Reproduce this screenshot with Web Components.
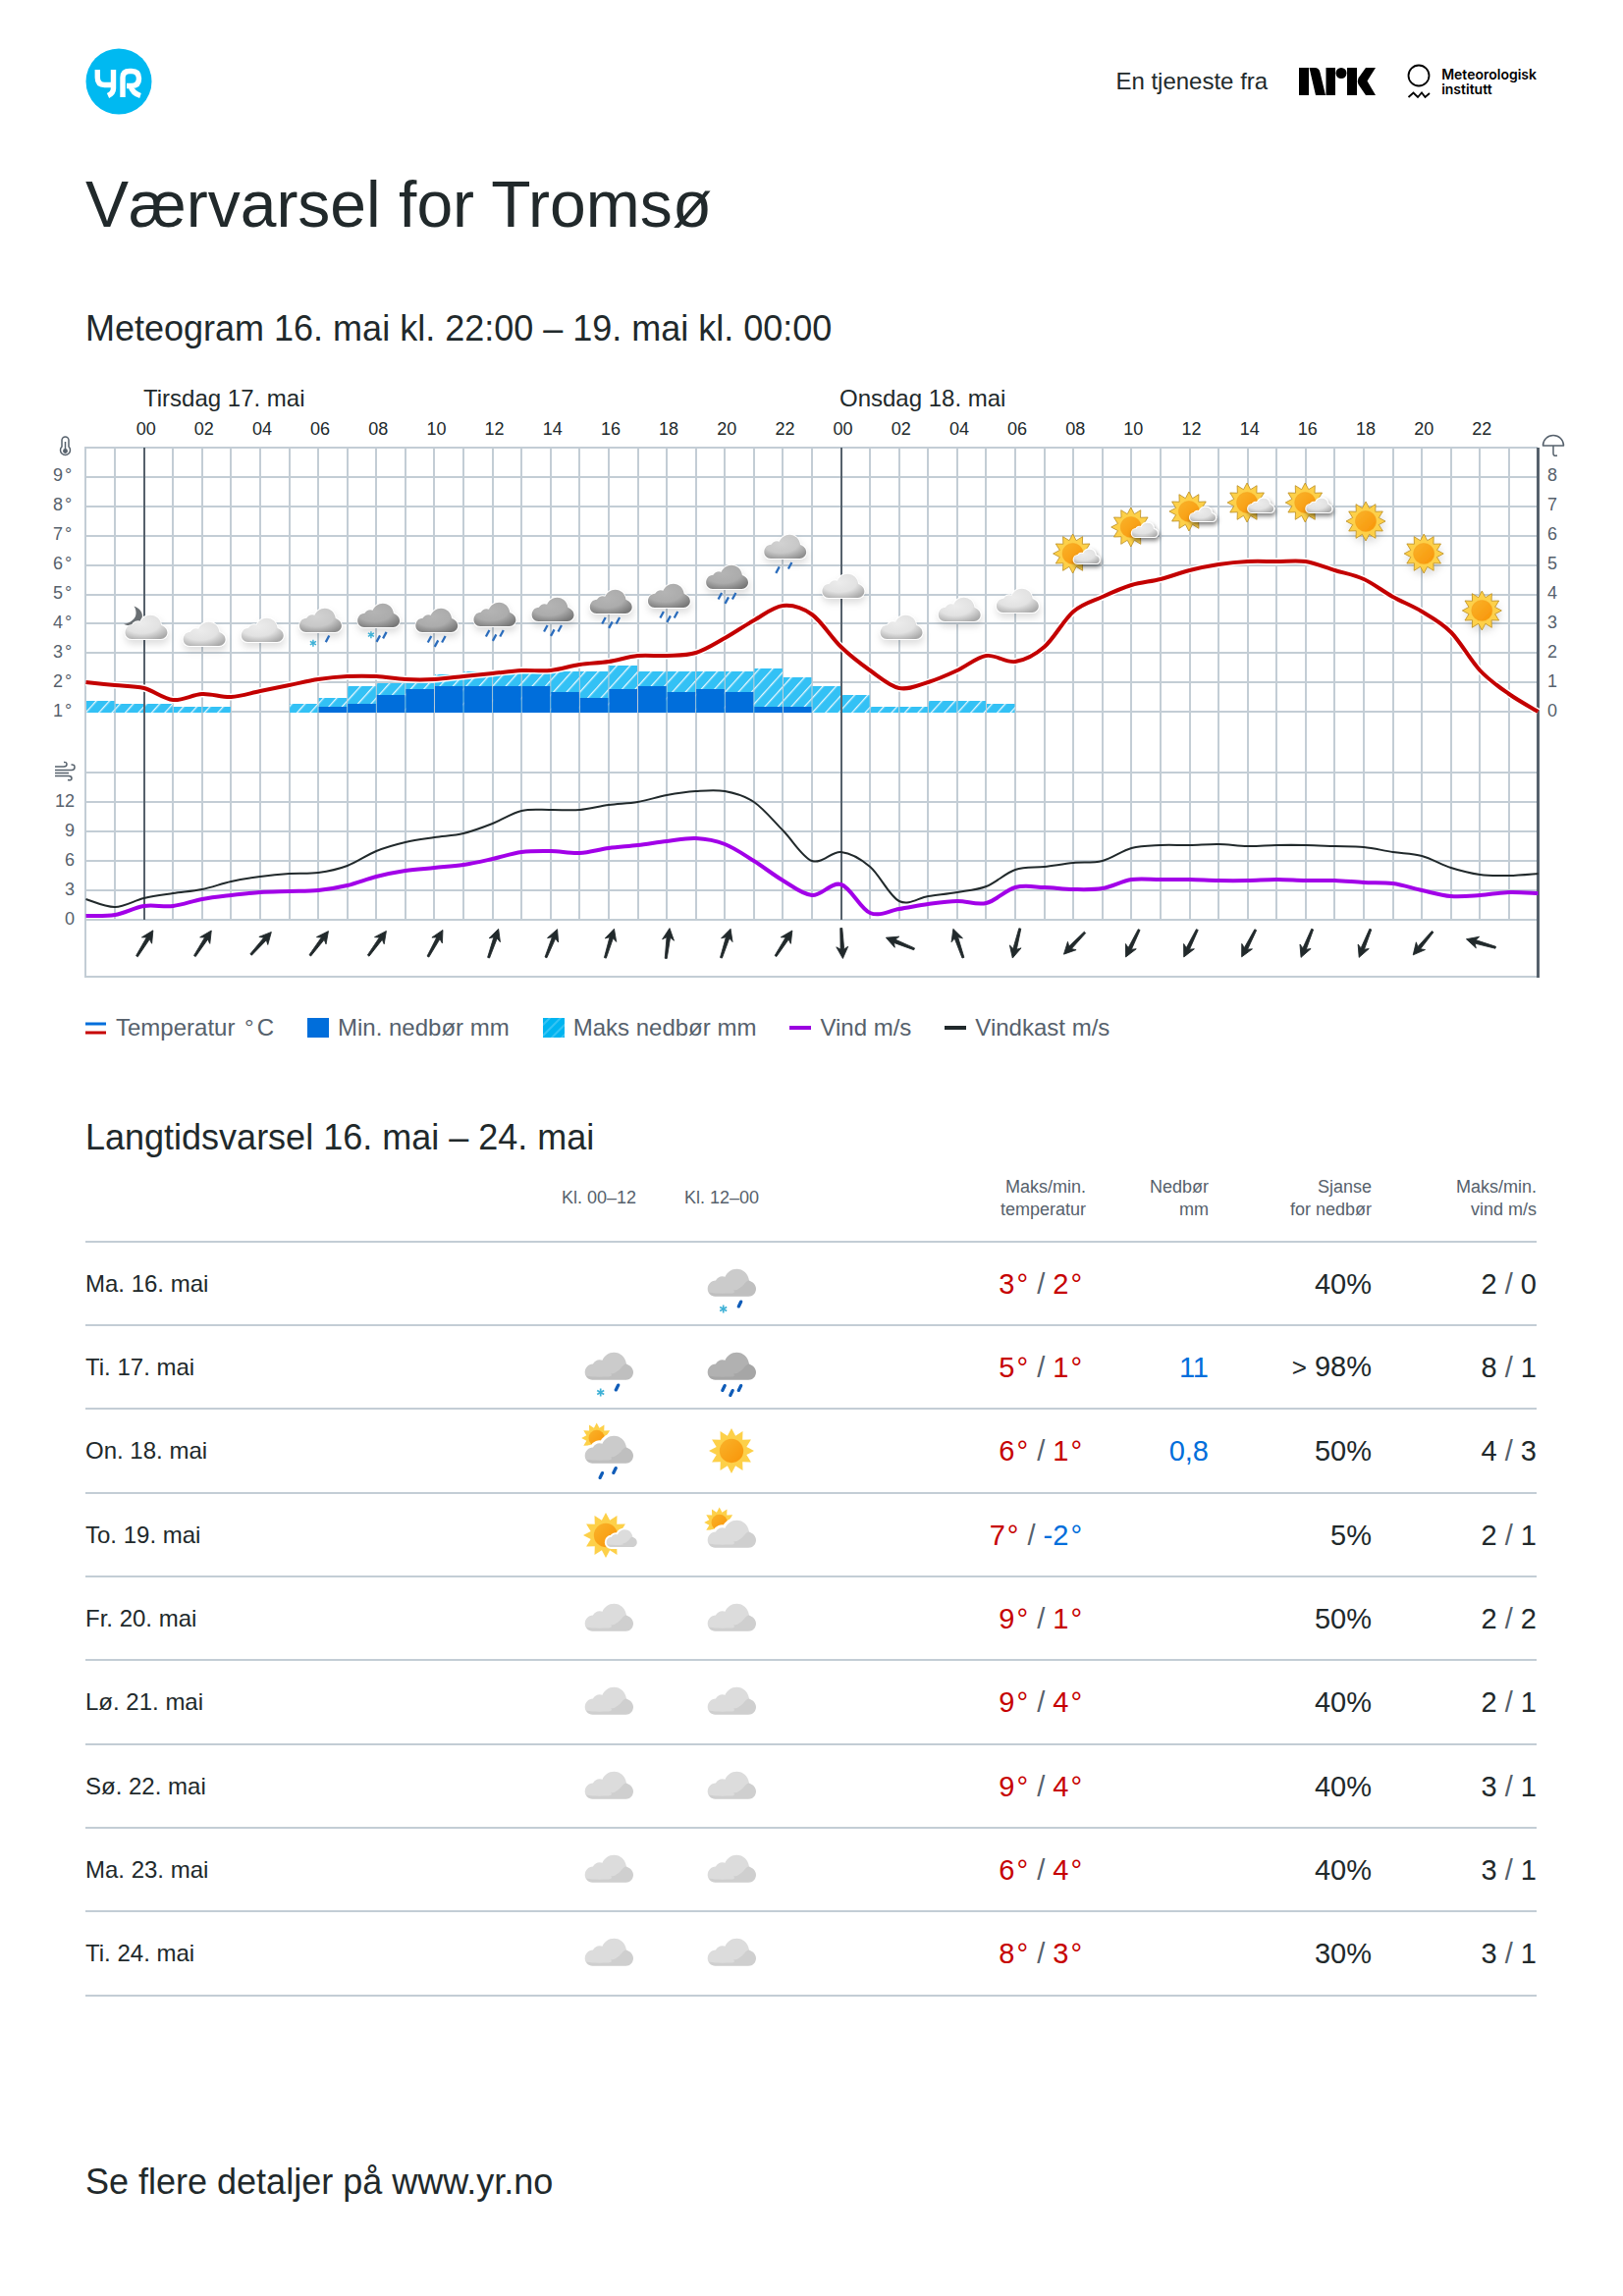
<!DOCTYPE html>
<html lang="nb">
<head>
<meta charset="utf-8">
<title>Værvarsel for Tromsø</title>
<style>
  body { margin: 0; background: #fff; color: #21292b; font-family: "Liberation Sans", Arial, sans-serif; }
</style>
</head>
<body>
<forecast-page>
  <yr-header slot="header">En tjeneste fra</yr-header>
  <page-heading slot="title" level="1">Værvarsel for Tromsø</page-heading>
  <page-heading slot="chart-title" level="2">Meteogram 16. mai kl. 22:00 – 19. mai kl. 00:00</page-heading>
  <meteo-gram slot="chart"></meteo-gram>
  <chart-legend slot="legend"></chart-legend>
  <page-heading slot="table-title" level="2">Langtidsvarsel 16. mai – 24. mai</page-heading>
  <forecast-table slot="table"></forecast-table>
  <page-footer slot="footer">Se flere detaljer på <a href="https://www.yr.no">www.yr.no</a></page-footer>
</forecast-page>

<script>
/* Weather symbols, drawn round their own centre in a 60 unit box. */
const CLOUD = 'M-16.5 12.7C-21 12.7-24.3 9.3-24.3 5C-24.3.5-21-3.5-16-3.6C-14.5-7-10-8.8-6.5-7.2C-4.5-12 0-15.3 5.3-15.3C12-15.3 17-10.5 18-3.5C22-2 25 1 25 5C25 9.5 21.5 12.7 17.5 12.7Z';
const SHADE = 'M18-3.5C14-3 13 1 10 3C7 5.500 5 6.500 2 6.500C4 8 3 9.500-2 9.500C-10 9.800-17 9.800-23 8.500C-21.500 11.500-19 12.700-16.500 12.700H17.500C21.500 12.700 25 9.500 25 5C25 1 22-2 18-3.500Z';

const defs = `<defs>
  <linearGradient id="disc" x1="0" y1="0" x2="1" y2="1"><stop offset="0" stop-color="#f9b32a"/><stop offset="1" stop-color="#f99408"/></linearGradient>
  <radialGradient id="c-light" cx=".4" cy=".35" r=".75"><stop offset="0" stop-color="#ececec"/><stop offset=".55" stop-color="#e2e2e2"/><stop offset="1" stop-color="#a9a9a9"/></radialGradient>
  <radialGradient id="c-mid" cx=".4" cy=".35" r=".75"><stop offset="0" stop-color="#d2d2d2"/><stop offset=".55" stop-color="#c8c8c8"/><stop offset="1" stop-color="#8e8e8e"/></radialGradient>
  <radialGradient id="c-dark" cx=".4" cy=".35" r=".75"><stop offset="0" stop-color="#b4b4b4"/><stop offset=".55" stop-color="#acacac"/><stop offset="1" stop-color="#777"/></radialGradient>
  <filter id="soft" x="-30%" y="-30%" width="160%" height="180%"><feDropShadow dx="1" dy="5" stdDeviation="4" flood-color="#000" flood-opacity=".13"/></filter>
  <filter id="deep" x="-30%" y="-30%" width="160%" height="180%"><feDropShadow dx="2" dy="5" stdDeviation="4" flood-color="#000" flood-opacity=".5"/></filter>
</defs>`;

function sun(x, y, tip, outlined) {
  const pts = [];
  for (let i = 0; i < 24; i++) {
    const r = i % 2 ? tip * .69 : tip, a = i * Math.PI / 12;
    pts.push((Math.sin(a) * r).toFixed(2) + ',' + (-Math.cos(a) * r).toFixed(2));
  }
  return `<g transform="translate(${x} ${y})"><polygon points="${pts.join(' ')}" fill="#fdd049" ${outlined ? 'stroke="#b98a1c" stroke-width=".9"' : ''}/>
    <circle r="${tip * .53}" fill="url(#disc)" ${outlined ? 'stroke="#f3a01c" stroke-width=".5"' : ''}/></g>`;
}
function cloud(tone, raised) {
  const flat = { light: '#dcdcdc', mid: '#cbcbcb', dark: '#b1b1b1' }[tone];
  return raised
    ? `<g filter="url(#soft)"><path d="${CLOUD}" fill="#fff" stroke="#fff" stroke-width="2"/><path d="${CLOUD}" fill="url(#c-${tone})"/></g>`
    : `<path d="${CLOUD}" fill="${flat}"/><path d="${SHADE}" fill="#000" opacity=".06"/>`;
}
const flake = (x, y) => `<path d="M${x} ${y - 4}V${y + 4}M${x - 3.500} ${y - 2}L${x + 3.500} ${y + 2}M${x - 3.500} ${y + 2}L${x + 3.500} ${y - 2}" stroke="#3fb1d6" stroke-width="1.700"/>`;

function symbol(type, raised) {
  const drop = (x, y) => raised
    ? `<path d="M${x + 1.4} ${y - 2.600}L${x - 1.4} ${y + 2.600}" stroke="#2a6cbc" stroke-width="2.600" stroke-linecap="square"/>`
    : `<path d="M${x + 1.200} ${y - 2.400}L${x - 1.200} ${y + 2.400}" stroke="#0f5cb8" stroke-width="3.300" stroke-linecap="round"/>`;
  switch (type) {
    case 'clear': return raised ? `<g filter="url(#soft)">${sun(0, 0, 23, true)}</g>` : sun(0, 0, 23);
    case 'fair': {
      const small = raised
        ? `<g filter="url(#deep)"><path d="${CLOUD}" fill="url(#c-light)" stroke="#fff" stroke-width="2"/></g>`
        : `<path d="${CLOUD}" fill="#fff" stroke="#fff" stroke-width="6"/>${cloud('light')}`;
      return sun(-3, 0, 23, raised) + `<g transform="translate(13 4) scale(.63)">${small}</g>`;
    }
    case 'cloudy': return cloud('light', raised);
    case 'moon': return '<path d="M-14-26C-5-23-2-15-6-9C-9-3-18-1-26-5C-18-6-13-11-12-15C-11-19-12-23-14-26Z" fill="#6a6f73"/>' + cloud('light', raised);
    case 'partly': return sun(-12.3, -13, 15.500) + `<path d="${CLOUD}" fill="#fff" stroke="#fff" stroke-width="6"/>` + cloud('light');
    case 'showers': return sun(-12.3, -13, 15.500) + `<path d="${CLOUD}" fill="#fff" stroke="#fff" stroke-width="6"/>` + cloud('mid') + drop(6, 20) + drop(-7.700, 25);
    case 'lightrain': return cloud('mid', raised) + drop(6, 21) + drop(-8.500, 26);
    case 'heavyrain': return cloud('dark', raised) + drop(-8, 21) + drop(0, 26) + drop(8.500, 21);
    case 'lightsleet': return cloud('mid', raised) + flake(-8.300, 25.500) + drop(8.500, 20.500);
    case 'heavysleet': return cloud('dark', raised) + flake(-8.500, 21.500) + drop(0, 26) + drop(7.500, 22);
  }
  return '';
}

function define(name, render) {
  customElements.define(name, class extends HTMLElement {
    connectedCallback() {
      if (this.shadowRoot) return;
      const root = this.attachShadow({ mode: 'open' });
      const t = document.createElement('template');
      t.innerHTML = render(this);
      root.append(t.content.cloneNode(true));
    }
  });
}

define('forecast-page', () => `
<style>
  :host { display: flex; flex-direction: column; padding-top: 49px; box-sizing: border-box; }
  .inset { padding: 0 88px 0 87px; }
  .title { margin-top: 51px; }
  .chart-title { margin-top: 65px; }
  .chart { margin-top: 23px; }
  .legend { margin-top: 33px; }
  .table-title { margin-top: 76px; }
  .footer { margin-top: 167px; }
</style>
<header class="inset"><slot name="header"></slot></header>
<main>
  <div class="inset title"><slot name="title"></slot></div>
  <div class="inset chart-title"><slot name="chart-title"></slot></div>
  <div class="chart"><slot name="chart"></slot></div>
  <div class="inset legend"><slot name="legend"></slot></div>
  <div class="inset table-title"><slot name="table-title"></slot></div>
  <div class="inset"><slot name="table"></slot></div>
</main>
<footer class="inset footer"><slot name="footer"></slot></footer>`);

define('page-heading', el => {
  const n = el.getAttribute('level');
  return `
<style>
  :host { display: block; }
  h1, h2 { margin: 0; font-weight: 400; }
  h1 { font-size: 66px; line-height: 80px; }
  h2 { font-size: 36px; line-height: 44px; }
</style>
<h${n}><slot></slot></h${n}>`;
});

define('page-footer', () => `
<style>
  :host { display: block; font-size: 36px; line-height: 44px; }
  ::slotted(a) { color: inherit; text-decoration: none; }
</style><slot></slot>`);

define('yr-header', () => `
<style>
  :host { display: flex; justify-content: space-between; align-items: center; }
  svg { display: block; }
  .by { display: flex; align-items: center; gap: 32px; font-size: 24px; line-height: 28px; }
  .met { display: flex; align-items: center; gap: 11px; color: #000; font: 600 14px/15px Inter, sans-serif; }
</style>
<svg width="68" height="68" viewBox="0 0 68 68" role="img" aria-label="Yr">
  <circle cx="34" cy="34" r="33.500" fill="#00b9f1"/>
  <g fill="none" stroke="#fff" stroke-width="5.400">
    <path d="M12.300 22V30Q12.300 37.500 19.500 37.500H27.500M28.500 22V41Q28.500 46 23 48.500"/>
    <path d="M38 50V30Q38 23.500 45 23.500H47Q54.500 23.500 54.500 31T47 38.500H42M46 38.500Q48 46 56 48.500"/>
  </g>
</svg>
<div class="by">
  <slot></slot>
  <svg width="78" height="28" viewBox="0 0 78 28" role="img" aria-label="NRK">
    <path d="M0 0H10V28H0ZM10.500 0H16Q20.500 0 21.500 5L27 28H17ZM27.500 0H37V28H27.500ZM49 0H59V28H49ZM68 0H78L69.500 13.500L78 28H68L60.500 17Q59 13.500 60.500 10.500Z"/>
    <circle cx="43" cy="5.500" r="5.500"/>
  </svg>
  <span class="met">
    <svg width="24" height="36" viewBox="0 0 24 36" fill="none" stroke="#000" stroke-width="1.800" aria-hidden="true">
      <circle cx="12" cy="12" r="10.500"/>
      <path d="M1.500 34L6.500 29.500L11 34L15 29.500L18.500 34L23 30"/>
    </svg>
    <span>Meteorologisk<br>institutt</span>
  </span>
</div>`);

define('chart-legend', () => {
  const line = (...c) => `<svg width="22" height="20" viewBox="0 0 22 20" aria-hidden="true">${
    c.length > 1 ? `<path d="M0 6H21" stroke="${c[0]}" stroke-width="3"/><path d="M0 15H21" stroke="${c[1]}" stroke-width="3"/>`
                 : `<path d="M0 10H22" stroke="${c[0]}" stroke-width="4"/>`}</svg>`;
  const items = [
    [line('#006edb', '#c60000'), 'Temperatur <span class="deg">°</span>C'],
    ['<svg width="22" height="20" aria-hidden="true"><rect width="22" height="20" fill="#006edb"/></svg>', 'Min. nedbør mm'],
    ['<svg width="22" height="20" viewBox="0 0 22 20" aria-hidden="true"><rect width="22" height="20" fill="#00b4f0"/><path d="M-2 9L9-2M-2 20L20-2M7 22L24 5M17 22L24 15" stroke="#35c3f4" stroke-width="2"/></svg>', 'Maks nedbør mm'],
    [line('#9a00e0'), 'Vind m/s'],
    [line('#21292b'), 'Vindkast m/s'],
  ];
  return `
<style>
  :host { display: block; }
  ul { margin: 0; padding: 0; list-style: none; display: flex; flex-wrap: wrap; gap: 34px; color: #56616c; font-size: 24px; line-height: 28px; }
  li { display: flex; align-items: center; gap: 9px; }
  svg { display: block; }
  .deg { padding: 0 3px; }
</style>
<ul>${items.map(([i, t]) => `<li>${i}<span>${t}</span></li>`).join('')}</ul>`;
});

define('weather-symbol', el => `
<style>:host { display: block; width: 56px; height: 60px; } svg { display: block; width: 100%; height: 100%; }</style>
<svg viewBox="-28 -30 56 60" overflow="visible" aria-hidden="true">${defs}${symbol(el.getAttribute('type'), false)}</svg>`);

define('forecast-table', () => {
  const rows = [
    ['Ma. 16. mai', '', 'lightsleet', 3, 2, '', '40%', 2, 0],
    ['Ti. 17. mai', 'lightsleet', 'heavyrain', 5, 1, '11', '98%', 8, 1],
    ['On. 18. mai', 'showers', 'clear', 6, 1, '0,8', '50%', 4, 3],
    ['To. 19. mai', 'fair', 'partly', 7, -2, '', '5%', 2, 1],
    ['Fr. 20. mai', 'cloudy', 'cloudy', 9, 1, '', '50%', 2, 2],
    ['Lø. 21. mai', 'cloudy', 'cloudy', 9, 4, '', '40%', 2, 1],
    ['Sø. 22. mai', 'cloudy', 'cloudy', 9, 4, '', '40%', 3, 1],
    ['Ma. 23. mai', 'cloudy', 'cloudy', 6, 4, '', '40%', 3, 1],
    ['Ti. 24. mai', 'cloudy', 'cloudy', 8, 3, '', '30%', 3, 1],
  ];
  const temp = v => `<span class="${v < 0 ? 'cold' : 'warm'}">${v}<span class="deg">°</span></span>`;
  const sym = s => s ? `<weather-symbol type="${s}"></weather-symbol>` : '';
  return `
<style>
  :host { display: block; }
  table { width: 100%; border-collapse: collapse; table-layout: fixed; }
  th { height: 84px; box-sizing: border-box; padding: 17px 0 0; font-size: 18px; line-height: 23px; font-weight: 400; color: #56616c; text-align: right; vertical-align: top; }
  th.time { padding-top: 28px; }
  tr { border-bottom: 2px solid #c3cdd5; }
  td { height: 85px; box-sizing: border-box; padding: 0; font-size: 29px; line-height: 34px; text-align: right; vertical-align: middle; }
  tbody tr:nth-child(3n) td { height: 86px; }
  tbody th { height: auto; padding: 0; color: inherit; font-size: 24px; line-height: 28px; text-align: left; vertical-align: middle; }
  weather-symbol { margin-left: auto; }
  .sym { width: 125px; } .temp { width: 333px; } .rain { width: 125px; } .chance { width: 166px; } .wind { width: 168px; }
  .temps { padding-right: 3px; }
  .warm { color: #c60000; } .cold, .mm { color: #006edb; }
  .deg { padding: 0 1px 0 2px; }
  .slash { color: #56616c; }
  .gt { font-size: 26px; }
</style>
<table>
  <colgroup><col><col class="sym"><col class="sym"><col class="temp"><col class="rain"><col class="chance"><col class="wind"></colgroup>
  <thead><tr><th></th><th class="time">Kl. 00–12</th><th class="time">Kl. 12–00</th><th>Maks/min.<br>temperatur</th><th>Nedbør<br>mm</th><th>Sjanse<br>for nedbør</th><th>Maks/min.<br>vind m/s</th></tr></thead>
  <tbody>${rows.map(r => `<tr><th scope="row">${r[0]}</th><td>${sym(r[1])}</td><td>${sym(r[2])}</td><td class="temps">${temp(r[3])} <span class="slash">/</span> ${temp(r[4])}</td><td class="mm">${r[5]}</td><td>${r[6] === '98%' ? '<span class="gt">&gt;</span> ' : ''}${r[6]}</td><td>${r[7]} <span class="slash">/</span> ${r[8]}</td></tr>`).join('')}</tbody>
</table>`;
});

define('meteo-gram', () => {
  const X0 = 87.5, STEP = 29.58, x = i => X0 + i * STEP;
  const tempY = t => 725 - (t - 1) * 30, windY = v => 937 - v * 10;
  const temps = [2,1.9,1.8,1.4,1.6,1.5,1.7,1.9,2.1,2.2,2.2,2.1,2.1,2.2,2.3,2.4,2.4,2.6,2.7,2.9,2.9,3,3.5,4.1,4.6,4.3,3.2,2.4,1.8,2,2.4,2.9,2.7,3.2,4.4,4.9,5.3,5.5,5.8,6,6.1,6.1,6.1,5.8,5.5,4.9,4.4,3.7,2.4,1.6,1];
  const wind = [.4,.5,1.4,1.4,2.1,2.5,2.8,2.9,3,3.5,4.4,5,5.3,5.6,6.2,6.9,7,6.8,7.3,7.6,8,8.3,7.7,6,4,2.5,3.6,.7,1.1,1.6,1.9,1.7,3.3,3.3,3.1,3.2,4.1,4.1,4.1,4,4,4.1,4,4,3.8,3.7,3,2.4,2.5,2.8,2.7];
  const gust = [2.1,1.3,2.2,2.7,3.1,3.9,4.4,4.7,4.8,5.5,7,7.9,8.4,8.8,9.8,11.1,11.2,11.2,11.7,12,12.7,13.1,13.1,12,9.1,6,6.9,5.4,1.9,2.4,2.8,3.4,5.1,5.4,5.8,6,7.3,7.6,7.6,7.7,7.5,7.6,7.6,7.5,7.4,6.9,6.5,5.3,4.6,4.5,4.7];
  const max = [.4,.3,.3,.2,.2,0,0,.3,.5,.9,1,1,1.3,1.4,1.4,1.4,1.4,1.4,1.6,1.4,1.4,1.4,1.4,1.5,1.2,.9,.6,.2,.2,.4,.4,.3];
  const min = [0,0,0,0,0,0,0,0,.2,.3,.6,.8,.9,.9,.9,.9,.7,.5,.8,.9,.7,.8,.7,.2,.2];
  const symbols = [['moon',640],['cloudy',647],['cloudy',643],['lightsleet',633],['heavysleet',628],['heavyrain',633],['heavyrain',627],['heavyrain',622],['heavyrain',614],['heavyrain',608],['heavyrain',589],['lightrain',558],['cloudy',598],['cloudy',640],['cloudy',622],['cloudy',613],['fair',564],['fair',537],['fair',521],['fair',512],['fair',512],['clear',531],['clear',564],['clear',622]];
  const dirs = [32,33,42,37,36,29,19,22,17,7,18,33,177,-68,-19,194,224,206,206,207,202,202,220,-74];

  const spline = (vals, y) => {
    const p = vals.map((v, i) => [x(i), y(v)]);
    let d = `M${p[0]}`;
    for (let i = 0; i < p.length - 1; i++) {
      const a = p[Math.max(i - 1, 0)], b = p[i], c = p[i + 1], e = p[Math.min(i + 2, p.length - 1)];
      const k = 1 / 6;
      d += `C${b[0] + (c[0] - a[0]) * k} ${b[1] + (c[1] - a[1]) * k} ${c[0] - (e[0] - b[0]) * k} ${c[1] - (e[1] - b[1]) * k} ${c[0]} ${c[1]}`;
    }
    return d;
  };

  let grid = '';
  for (let i = 1; i < 50; i++) grid += `M${x(i)} 455V937`;
  for (let k = 0; k < 10; k++) grid += `M86 ${Math.round(456 + k * 29.9)}H1566`;
  for (let k = 0; k < 6; k++) grid += `M86 ${787 + k * 30}H1566`;
  grid += 'M87 455V995M86 995H1566';

  const bars = (vals, fill) => vals.map((v, i) => v ? `<rect x="${x(i) + .5}" y="${726 - v * 30}" width="${STEP - 1}" height="${v * 30}" fill="${fill}"/>` : '').join('');
  let hours = '', icons = '', arrows = '', axis = '';
  for (let n = 0; n < 24; n++) {
    const cx = x(2 + 2 * n);
    hours += `<text x="${cx + 2}" y="443" text-anchor="middle">${String(n * 2 % 24).padStart(2, '0')}</text>`;
    icons += `<g transform="translate(${cx + 2} ${symbols[n][1]}) scale(.87)">${symbol(symbols[n][0], true)}</g>`;
    arrows += `<path transform="translate(${cx + 1} 961) rotate(${dirs[n]})" d="M0-15.500L6-3.500L1.800-6L1 15.500H-1L-1.800-6L-6-3.500Z" stroke="#21292b" stroke-width=".8" stroke-linejoin="round"/>`;
  }
  for (let t = 1; t < 10; t++) {
    const y = tempY(t) + 5;
    axis += `<text x="54" y="${y}">${t}<tspan dx="2">°</tspan></text><text x="1576" y="${y}">${t - 1}</text>`;
  }
  for (let v = 0; v <= 12; v += 3) axis += `<text x="76" y="${windY(v) + 5}" text-anchor="end">${v}</text>`;

  return `
<style>
  :host { display: block; }
  svg { display: block; width: 100%; height: auto; }
  text { font-family: "Liberation Sans", Arial, sans-serif; font-size: 18px; fill: #21292b; }
  .day { font-size: 24px; }
  .axis text { fill: #56616c; }
</style>
<svg viewBox="0 380 1653 620" role="img" aria-label="Meteogram">
  ${defs}
  <defs><pattern id="hatch" width="10" height="10" patternUnits="userSpaceOnUse" patternTransform="rotate(42)"><rect width="10" height="10" fill="#33c1f5"/><rect width="1.300" height="10" fill="#e8f8fe"/></pattern></defs>
  <text class="day" x="146" y="414">Tirsdag 17. mai</text>
  <text class="day" x="855" y="414">Onsdag 18. mai</text>
  ${hours}
  <path d="${grid}" stroke="#c3cdd5" stroke-width="2" fill="none" shape-rendering="crispEdges"/>
  ${bars(max, 'url(#hatch)')}${bars(min, '#006edb')}
  <path d="M${x(2)} 456V937M${x(26)} 456V937" stroke="#56616c" stroke-width="2" shape-rendering="crispEdges"/>
  <path d="M1566.500 456V996" stroke="#56616c" stroke-width="3" shape-rendering="crispEdges"/>
  ${icons}
  <g fill="none">
    <path d="${spline(temps, tempY)}" stroke="#fff" stroke-width="7"/>
    <path d="${spline(temps, tempY)}" stroke="#c30000" stroke-width="4"/>
    <path d="${spline(gust, windY)}" stroke="#21292b" stroke-width="2"/>
    <path d="${spline(wind, windY)}" stroke="#a200e8" stroke-width="4"/>
  </g>
  <g fill="#21292b">${arrows}</g>
  <g class="axis">${axis}</g>
  <g fill="none" stroke="#56616c" stroke-width="1.500">
    <path d="M63 455V448.500A3.500 3.500 0 0 1 70 448.500V455A5 5 0 1 1 63 455Z"/>
    <path d="M66.500 450V459"/><circle cx="66.500" cy="459.500" r="1.700" fill="#56616c"/>
    <path d="M1571.500 454A10.500 10.500 0 0 1 1592.500 454Z" stroke-linejoin="round"/>
    <path d="M1582 454V462Q1582 465 1586 464"/>
    <path d="M56 781H65Q68 781 68 778.500T65 776.500M56 784.500H73Q76 784.500 76 781.500T72.500 779M56 787.500H70M56 790.500H70Q73 790.500 73 793T69 794.500"/>
  </g>
</svg>`;
});
</script>
</body>
</html>
